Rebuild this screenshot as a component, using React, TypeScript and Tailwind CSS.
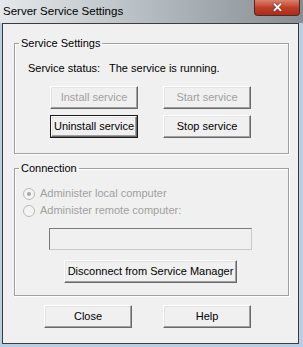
import React from "react";

const font = { fontFamily: '"Liberation Sans", Arial, sans-serif' };

function Button({ label, disabled, isDefault, className = "" }: { label: string; disabled?: boolean; isDefault?: boolean; className?: string }) {
  return (
    <div className={`h-[23px] ${isDefault ? "border border-[#1a1a1a]" : ""} ${className}`}>
      <div
        className={`w-full h-full flex items-center justify-center bg-[#f0f0f0] border border-t-white border-l-white border-r-[#696969] border-b-[#696969] shadow-[inset_-1px_-1px_0_#a0a0a0,inset_1px_1px_0_#e3e3e3] text-[11px] ${disabled ? "text-[#a0a0a0]" : "text-black"}`}
      >
        {label}
      </div>
    </div>
  );
}

function Radio({ label, checked }: { label: string; checked?: boolean }) {
  return (
    <div className="flex items-center h-[17px]">
      <div className="ml-[8px] w-[12px] h-[12px] rounded-full border border-[#b9b9b9] bg-[#f4f4f4] flex items-center justify-center">
        {checked && <div className="w-[4px] h-[4px] rounded-full bg-[#a6a6a6]" />}
      </div>
      <span className="ml-[5px] text-[11px] text-[#a0a0a0]">{label}</span>
    </div>
  );
}

export default function App() {
  return (
    <div className="w-[303px] h-[347px] flex flex-col bg-[#b9cde4] overflow-hidden" style={font}>
      {/* title bar */}
      <div className="h-[23px] flex items-start bg-gradient-to-r from-[#e6e9eb] via-[#b4bbc0] to-[#878e93]">
        <span className="ml-[3px] mt-[3px] text-[11.5px] text-black leading-[16px]">Server Service Settings</span>
        <div className="ml-auto mr-[3px] w-[46px] h-[16px] rounded-b-[4px] border border-t-0 border-[#5e241b] bg-gradient-to-b from-[#d9826c] via-[#c13e28] to-[#a92d1a] flex items-center justify-center">
          <span className="text-white font-bold text-[13px] leading-none" style={{ textShadow: "0 0 1px #3a1008, 0 0 1px #3a1008" }}>✕</span>
        </div>
      </div>

      <div className="flex-1 flex pl-[2px] pr-[4px] pb-[3px]">
        <div className="flex-1 border border-[#3c3c3c] bg-[#f0f0f0] flex flex-col">
          {/* Service Settings group */}
          <fieldset className="mt-[13px] ml-[11px] mr-[9px] h-[117px] border border-[#a0a0a0] shadow-[inset_1px_1px_0_white,1px_1px_0_white]">
            <legend className="ml-[4px] px-[2px] text-[11px] leading-[13px] text-black">Service Settings</legend>
            <div className="mt-[12px] ml-[13px] flex text-[11px] leading-[13px] text-black">
              <span className="w-[81px]">Service status:</span>
              <span>The service is running.</span>
            </div>
            <div className="mt-[11px] ml-[35px] grid grid-cols-[88px_88px] gap-x-[25px] gap-y-[6px]">
              <Button label="Install service" disabled />
              <Button label="Start service" disabled />
              <Button label="Uninstall service" isDefault />
              <Button label="Stop service" />
            </div>
          </fieldset>

          {/* Connection group */}
          <fieldset className="mt-[8px] ml-[11px] mr-[9px] h-[134px] border border-[#a0a0a0] shadow-[inset_1px_1px_0_white,1px_1px_0_white]">
            <legend className="ml-[4px] px-[2px] text-[11px] leading-[13px] text-black">Connection</legend>
            <div className="mt-[10px] flex flex-col">
              <Radio label="Administer local computer" checked />
              <Radio label="Administer remote computer:" />
            </div>
            <div className="mt-[9px] ml-[34px] w-[203px] h-[22px] bg-[#f0f0f0] border border-t-[#7a7a7a] border-l-[#7a7a7a] border-r-[#c8c8c8] border-b-[#c8c8c8]" />
            <div className="mt-[10px] ml-[49px] w-[173px]">
              <Button label="Disconnect from Service Manager" />
            </div>
          </fieldset>

          <div className="mt-[9px] ml-[41px] flex gap-x-[31px]">
            <Button label="Close" className="w-[88px]" />
            <Button label="Help" className="w-[88px]" />
          </div>
        </div>
      </div>
    </div>
  );
}
